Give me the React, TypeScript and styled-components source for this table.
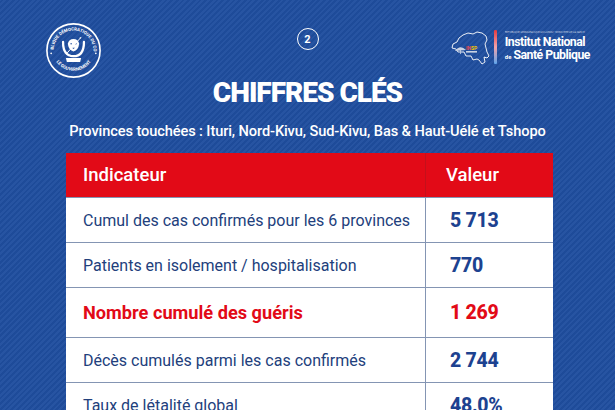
import React from 'react'
import styled, { createGlobalStyle } from 'styled-components'

const GlobalStyle = createGlobalStyle`
  html, body {
    margin: 0;
    padding: 0;
    background: #1f4e9f;
  }
  * {
    box-sizing: border-box;
  }
`

const Page = styled.div`
  width: 615px;
  height: 410px;
  overflow: hidden;
  font-family: Roboto, 'Liberation Sans', sans-serif;
  background-color: #1f4e9f;
  background-image: repeating-linear-gradient(
    -45deg,
    rgba(255, 255, 255, 0.035) 0 2px,
    rgba(0, 0, 0, 0.035) 2px 4px
  );
`

const Header = styled.header`
  display: grid;
  grid-template-columns: 1fr auto 1fr;
  align-items: start;
  padding: 22px 25px 0;
  height: 79px;
`

const SealWrap = styled.div`
  justify-self: start;
  margin-left: 20px;
  width: 57px;
  height: 57px;
`

const PageNumber = styled.div`
  margin-top: 6px;
  width: 22px;
  height: 22px;
  border: 1.5px solid #ffffff;
  border-radius: 50%;
  display: flex;
  align-items: center;
  justify-content: center;
  color: #ffffff;
  font-size: 11px;
  font-weight: 700;
`

const InspLogo = styled.div`
  justify-self: end;
  display: flex;
  align-items: center;
  gap: 3px;
  margin-top: 7px;
`

const ColourBar = styled.div`
  width: 3px;
  height: 34px;
  border-radius: 1px;
  background: linear-gradient(#e53a3f, #f3a2a9 50%, #5ea5ec);
  margin-right: 5px;
`

const InspText = styled.div`
  display: flex;
  flex-direction: column;
  color: #ffffff;
`

const Ministry = styled.span`
  display: block;
  width: 0;
  min-width: 100%;
  height: 5px;
  overflow: hidden;
  font-size: 2.6px;
  line-height: 4px;
  opacity: 0.7;
  white-space: nowrap;
`

const InspLine = styled.span`
  font-size: 12.3px;
  font-weight: 700;
  line-height: 13px;
  letter-spacing: -0.5px;
  white-space: nowrap;
`

const Small = styled.span`
  font-size: 6px;
  font-weight: 700;
  letter-spacing: 0;
  margin-right: 2px;
`

const Title = styled.h1`
  margin: 0;
  text-align: center;
  color: #ffffff;
  font-size: 28px;
  line-height: 28px;
  font-weight: 900;
  letter-spacing: -1px;
`

const Subtitle = styled.p`
  margin: 16px 0 0;
  text-align: center;
  color: #ffffff;
  font-size: 14.6px;
  line-height: 16px;
  font-weight: 500;
  letter-spacing: -0.1px;
`

const Table = styled.div`
  margin: 14px 0 0 66px;
  width: 487px;
  background: #ffffff;
`

const Row = styled.div<{ $head?: boolean; $tall?: boolean }>`
  display: grid;
  grid-template-columns: 360px 1fr;
  height: ${(p) => (p.$head ? 44 : p.$tall ? 50 : 45)}px;
  background: ${(p) => (p.$head ? '#e20a17' : '#ffffff')};
  border-top: ${(p) => (p.$head ? 'none' : '1.5px solid #8495b3')};
`

const Cell = styled.div<{ $head?: boolean; $value?: boolean; $red?: boolean }>`
  display: flex;
  align-items: center;
  padding-left: ${(p) => (p.$value ? (p.$head ? 20 : 24) : 17)}px;
  border-right: ${(p) => (p.$value ? 'none' : p.$head ? '1.5px solid #c4101b' : '1.5px solid #8495b3')};
  font-size: ${(p) => (p.$head ? 18.5 : p.$value ? 19.5 : p.$red ? 18.2 : 16)}px;
  font-weight: ${(p) => (p.$head ? 500 : p.$value ? 800 : p.$red ? 700 : 400)};
  color: ${(p) => (p.$head ? '#ffffff' : p.$red ? '#e20a17' : p.$value ? '#1d4290' : '#22407c')};
  white-space: nowrap;
  letter-spacing: ${(p) => (p.$value && !p.$head ? '-0.3px' : '0')};
`

const Seal = () => (
  <svg width="57" height="57" viewBox="0 0 60 60">
    <defs>
      <path id="sealTop" d="M9 30 A21 21 0 0 1 51 30" />
      <path id="sealBottom" d="M8.5 34 A22 22 0 0 0 51.5 34" />
    </defs>
    <circle cx="30" cy="30" r="28" fill="none" stroke="#fff" strokeWidth="1.7" />
    <text fill="#fff" fontSize="4.6" fontWeight="700" fontFamily="Roboto, sans-serif">
      <textPath href="#sealTop" startOffset="50%" textAnchor="middle">
        RÉPUBLIQUE DÉMOCRATIQUE DU CONGO
      </textPath>
    </text>
    <text fill="#fff" fontSize="4.6" fontWeight="700" fontFamily="Roboto, sans-serif">
      <textPath href="#sealBottom" startOffset="50%" textAnchor="middle">
        LE GOUVERNEMENT
      </textPath>
    </text>
    <circle cx="6.5" cy="33" r="0.9" fill="#fff" />
    <circle cx="53.5" cy="33" r="0.9" fill="#fff" />
    <path d="M19 21 Q19 36 30 36 Q41 36 41 21" fill="none" stroke="#fff" strokeWidth="2.4" strokeLinecap="round" />
    <path d="M24 23 Q25 18 30 18 Q35 18 36 23 Q35 30 30 31 Q25 30 24 23 Z" fill="#fff" />
    <circle cx="27.5" cy="23" r="0.8" fill="#1f4e9f" />
    <circle cx="32.5" cy="23" r="0.8" fill="#1f4e9f" />
    <path d="M28.5 27 L31.5 27 L30 28.5 Z" fill="#1f4e9f" />
    <line x1="23" y1="33" x2="38" y2="16" stroke="#fff" strokeWidth="1" />
    <path d="M38 16 L36.2 16.6 L37.4 17.8 Z" fill="#fff" />
    <path d="M22 38 L38 38 L37 42 L23 42 Z" fill="#fff" />
  </svg>
)

const DrcMap = () => (
  <svg width="40" height="36" viewBox="0 0 40 36">
    <path
      d="M2 15 L6 13 L8 9 L12 6 L17 4 L22 5 L26 3 L31 4 L35 7 L36 11 L34 15 L35 19 L36 23 L38 27 L36 29 L33 28 L34 33 L31 35 L28 31 L26 30 L22 31 L20 27 L15 27 L13 23 L7 23 L5 20 L1 19 Z"
      fill="none"
      stroke="#fff"
      strokeWidth="0.9"
      strokeLinejoin="round"
    />
    <path d="M4 22 Q9 15 15 21 Z" fill="#c9d2e3" />
    <line x1="9.5" y1="21" x2="9.5" y2="25" stroke="#c9d2e3" strokeWidth="0.8" />
    <text x="15" y="21" fontSize="5" fontWeight="700" fontFamily="Roboto, sans-serif" fill="#f04a50">
      IN<tspan fill="#f5c400">SP</tspan>
    </text>
    <rect x="15" y="22" width="11" height="1.6" fill="#c9d2e3" />
  </svg>
)

type Item = { label: string; value: string; red?: boolean }

const items: Item[] = [
  { label: 'Cumul des cas confirmés pour les 6 provinces', value: '5 713' },
  { label: 'Patients en isolement / hospitalisation', value: '770' },
  { label: 'Nombre cumulé des guéris', value: '1 269', red: true },
  { label: 'Décès cumulés parmi les cas confirmés', value: '2 744' },
  { label: 'Taux de létalité global', value: '48.0%' },
]

export default function App() {
  return (
    <Page>
      <GlobalStyle />
      <Header>
        <SealWrap>
          <Seal />
        </SealWrap>
        <PageNumber>2</PageNumber>
        <InspLogo>
          <DrcMap />
          <ColourBar />
          <InspText>
            <Ministry>RÉPUBLIQUE DÉMOCRATIQUE DU CONGO · MINISTÈRE DE LA SANTÉ</Ministry>
            <InspLine>Institut National</InspLine>
            <InspLine>
              <Small>de</Small>Santé Publique
            </InspLine>
          </InspText>
        </InspLogo>
      </Header>
      <Title>CHIFFRES CLÉS</Title>
      <Subtitle>Provinces touchées : Ituri, Nord-Kivu, Sud-Kivu, Bas &amp; Haut-Uélé et Tshopo</Subtitle>
      <Table>
        <Row $head>
          <Cell $head>Indicateur</Cell>
          <Cell $head $value>
            Valeur
          </Cell>
        </Row>
        {items.map((it) => (
          <Row key={it.label} $tall={it.red}>
            <Cell $red={it.red}>{it.label}</Cell>
            <Cell $value $red={it.red}>
              {it.value}
            </Cell>
          </Row>
        ))}
      </Table>
    </Page>
  )
}
